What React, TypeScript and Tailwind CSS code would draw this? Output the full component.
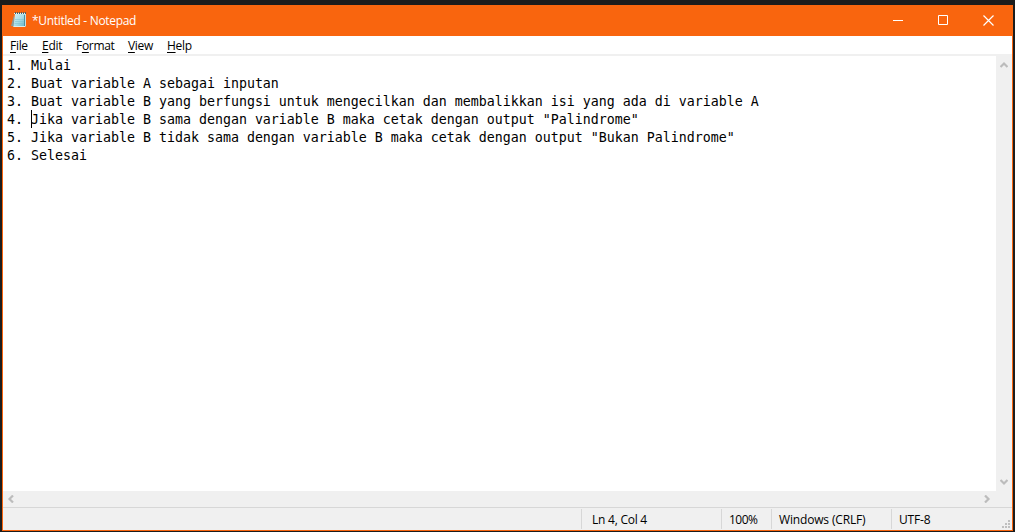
import React from "react";

const lines = [
  "1. Mulai",
  "2. Buat variable A sebagai inputan",
  "3. Buat variable B yang berfungsi untuk mengecilkan dan membalikkan isi yang ada di variable A",
  "4. Jika variable B sama dengan variable B maka cetak dengan output \"Palindrome\"",
  "5. Jika variable B tidak sama dengan variable B maka cetak dengan output \"Bukan Palindrome\"",
  "6. Selesai",
];

const menus = [
  { pre: "", key: "F", post: "ile", width: "w-8" },
  { pre: "", key: "E", post: "dit", width: "w-[34px]" },
  { pre: "F", key: "o", post: "rmat", width: "w-[52px]" },
  { pre: "", key: "V", post: "iew", width: "w-[39px]" },
  { pre: "", key: "H", post: "elp", width: "w-10" },
];

function NotepadIcon() {
  return (
    <svg width="16" height="16" viewBox="0 0 16 16" className="mb-px shrink-0">
      <defs>
        <linearGradient id="page" x1="0" y1="0" x2="1" y2="1">
          <stop offset="0" stopColor="#d9f2f5" />
          <stop offset="0.5" stopColor="#a9dde7" />
          <stop offset="1" stopColor="#62b2c4" />
        </linearGradient>
      </defs>
      <path d="M3 3L0 14L4 14.5Z" fill="#8a9a98" />
      <path d="M4 1H14.5L14 15H2.5Z" fill="url(#page)" />
      <path d="M14 1H15V14.5H14Z" fill="#c5dfe4" />
      <path d="M13 3H14V14H13Z" fill="#4d91a1" />
      <path d="M2.5 14H14V15H2.5Z" fill="#d9eff2" />
      <path d="M4 7.5H13M4 9.5H13M3.5 11.5H13" stroke="#79bfce" strokeWidth="0.5" />
      <path d="M3 1.5H15" stroke="#e4f4f6" />
      <path d="M4.5 0V2M6.5 0V2M8.5 0V2M10.5 0V2M12.5 0V2M14.5 0V2" stroke="#48636a" />
    </svg>
  );
}

function Chevron({ turn }: { turn: string }) {
  return (
    <svg width="8" height="8" viewBox="0 0 8 8" className={turn}>
      <path d="M0.5 6L4 2.5L7.5 6" fill="none" stroke="#bcbcbc" strokeWidth="2.2" />
    </svg>
  );
}

function TitleBar() {
  return (
    <header className="flex h-[31px] shrink-0 items-center bg-[#f9650e] text-white">
      <div className="flex flex-1 items-center pl-2">
        <NotepadIcon />
        <span className="ml-[5px] text-[12px] leading-4 tracking-[-0.32px]">*Untitled - Notepad</span>
      </div>
      <div className="flex h-full items-center">
        <span className="flex w-[45px] justify-center">
          <svg width="10" height="10" viewBox="0 0 10 10"><path d="M0 4.5H10" stroke="white" /></svg>
        </span>
        <span className="flex w-[45px] justify-center pb-px">
          <svg width="10" height="10" viewBox="0 0 10 10"><path d="M.5 .5H9.5V9.5H.5Z" fill="none" stroke="white" /></svg>
        </span>
        <span className="flex w-[47px] justify-center pb-px">
          <svg width="11" height="11" viewBox="0 0 11 11"><path d="M.5 .5L10.5 10.5M10.5 .5L.5 10.5" stroke="white" strokeWidth="1.2" /></svg>
        </span>
      </div>
    </header>
  );
}

function MenuBar() {
  return (
    <nav className="flex h-5 shrink-0 border-b-2 border-[#f0f0f0] bg-white pl-[7px] text-[12px] leading-5 tracking-[-0.3px]">
      {menus.map((m) => (
        <span key={m.key} className={m.width}>
          {m.pre}
          <span className="underline decoration-1 underline-offset-2">{m.key}</span>
          {m.post}
        </span>
      ))}
    </nav>
  );
}

function StatusBar() {
  return (
    <footer className="flex h-[23px] shrink-0 border-t border-[#d7d7d7] bg-[#f0f0f0] text-[12px] leading-[22px] whitespace-nowrap">
      <div className="flex-1" />
      <div className="my-px w-[140px] border-l border-[#d7d7d7] pl-[10px] tracking-[-0.24px]">Ln 4, Col 4</div>
      <div className="my-px w-[50px] border-l border-[#d7d7d7] pl-[7px] tracking-[-0.5px]">100%</div>
      <div className="my-px w-[120px] border-l border-[#d7d7d7] pl-[7px] tracking-[-0.16px]">Windows (CRLF)</div>
      <div className="my-px flex w-[121px] justify-between border-l border-[#d7d7d7] pl-[7px]">
        <span className="tracking-[-0.16px]">UTF-8</span>
        <svg width="8" height="8" viewBox="0 0 8 8" className="mr-0.5 mb-px self-end" fill="#bfbfbf">
          <path d="M6 0h2v2H6zM3 3h2v2H3zM6 3h2v2H6zM0 6h2v2H0zM3 6h2v2H3zM6 6h2v2H6z" />
        </svg>
      </div>
    </footer>
  );
}

export default function App() {
  return (
    <div className="flex h-[532px] w-[1015px] bg-[#1c1c1c] pt-[5px] pr-0.5 pb-px pl-0.5 font-['Open_Sans','Noto_Sans',sans-serif] text-black">
      <div className="flex min-w-0 flex-1 flex-col border-x border-b border-[#f9650e]">
        <TitleBar />
        <MenuBar />
        <main className="flex min-h-0 flex-1 bg-[#f0f0f0]">
          <div className="flex-1 bg-white pt-px pl-1 font-['DejaVu_Sans_Mono',monospace] text-[13.29px] leading-[18px] whitespace-pre">
            {lines.map((line, i) => (
              <div key={line} className="relative h-[18px]">
                {line}
                {i === 3 && <span className="absolute -top-px left-6 h-[18px] w-px bg-black" />}
              </div>
            ))}
          </div>
          <div className="flex w-4 shrink-0 flex-col items-center justify-between py-[5px]">
            <Chevron turn="" />
            <Chevron turn="rotate-180" />
          </div>
        </main>
        <div className="flex h-4 shrink-0 items-center justify-between bg-[#f0f0f0] pr-[21px] pb-px pl-1">
          <Chevron turn="-rotate-90" />
          <Chevron turn="rotate-90" />
        </div>
        <StatusBar />
      </div>
    </div>
  );
}
